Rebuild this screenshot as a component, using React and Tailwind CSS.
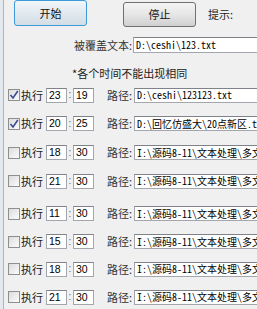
const rows = [
  { on: true,  h: '23', m: '19', path: 'D:\\ceshi\\123123.txt',      cls: 'h-[28px]' },
  { on: true,  h: '20', m: '25', path: 'D:\\回忆仿盛大\\20点新区.txt', cls: 'h-[29px]' },
  { on: false, h: '18', m: '30', path: 'I:\\源码8-11\\文本处理\\多文', cls: 'h-[29px]' },
  { on: false, h: '21', m: '30', path: 'I:\\源码8-11\\文本处理\\多文', cls: 'h-[28px]' },
  { on: false, h: '11', m: '30', path: 'I:\\源码8-11\\文本处理\\多文', cls: 'h-[29px] mt-[4px]' },
  { on: false, h: '15', m: '30', path: 'I:\\源码8-11\\文本处理\\多文', cls: 'h-[27px]' },
  { on: false, h: '18', m: '30', path: 'I:\\源码8-11\\文本处理\\多文', cls: 'h-[28px]' },
  { on: false, h: '21', m: '30', path: 'I:\\源码8-11\\文本处理\\多文', cls: 'h-[28px]' },
];

const cjk = "font-['Noto_Sans_CJK_SC',sans-serif]";
const pathFont = "font-['Noto_Sans_Mono_CJK_SC','Liberation_Mono','Noto_Sans_CJK_SC',monospace]";

function Box({ children, className = '' }) {
  return (
    <div
      className={`shrink-0 flex items-center bg-white border border-[#a3a6ad] border-t-[#7f8389] overflow-hidden whitespace-nowrap ${className}`}
    >
      {children}
    </div>
  );
}

function Check({ on }) {
  return (
    <div className="shrink-0 w-[12px] h-[12px] border border-[#8e8f8f] bg-gradient-to-br from-[#dcdcdc] to-[#fbfbfb] flex items-center justify-center">
      {on && (
        <svg width="10" height="10" viewBox="0 0 10 10">
          <path d="M1.5 5 L4 8 L8.8 1" fill="none" stroke="#3b4a93" strokeWidth="1.6" />
        </svg>
      )}
    </div>
  );
}

function TaskRow({ row }) {
  return (
    <div className={`flex items-center pl-[4px] whitespace-nowrap ${row.cls}`}>
      <Check on={row.on} />
      <span className={`shrink-0 w-[26px] pl-[1px] text-[11px] leading-none text-[#222] ${cjk}`}>执行</span>
      <Box className="w-[21px] h-[15px] pl-[2px]">
        <span className="font-['Liberation_Sans',sans-serif] text-[10.5px] leading-none text-black">{row.h}</span>
      </Box>
      <span className="shrink-0 w-[6px] text-center text-[10px] leading-none text-[#666] font-['Liberation_Sans',sans-serif]">:</span>
      <Box className="w-[21px] h-[15px] pl-[2px]">
        <span className="font-['Liberation_Sans',sans-serif] text-[10.5px] leading-none text-black">{row.m}</span>
      </Box>
      <span className={`shrink-0 ml-[13px] w-[27px] text-[11px] leading-none text-[#333] ${cjk}`}>路径:</span>
      <Box className="w-[140px] h-[15px] pl-[2px]">
        <span className={`${pathFont} text-[10px] leading-none text-black`}>{row.path}</span>
      </Box>
    </div>
  );
}

export default function App() {
  return (
    <div className="w-[257px] h-[309px] bg-[#f0f0f0] overflow-hidden flex">
      {/* window edge */}
      <div className="w-[4px] shrink-0 bg-[#e4e9ef] border-r border-[#a9b5c2]" />

      <div className="flex-1 flex flex-col min-w-0">
        {/* buttons */}
        <div className="h-[28px] flex items-start shrink-0 whitespace-nowrap">
          <button className={`shrink-0 ml-[10px] w-[73px] h-[26px] rounded-[3px] border border-[#3c9ad8] bg-gradient-to-b from-[#f1f6fa] to-[#d3dde5] text-[11px] text-[#111] ${cjk}`}>
            开始
          </button>
          <button className={`shrink-0 ml-[36px] mt-[2px] w-[73px] h-[25px] rounded-[3px] border border-[#707070] bg-gradient-to-b from-[#f4f4f4] via-[#e6e6e6] to-[#d0d0d0] text-[11px] text-[#111] ${cjk}`}>
            停止
          </button>
          <span className={`shrink-0 ml-[12px] mt-[9px] text-[11px] leading-none text-[#222] ${cjk}`}>提示:</span>
        </div>

        {/* target file */}
        <div className="mt-[9px] h-[16px] flex items-center shrink-0 whitespace-nowrap">
          <span className={`shrink-0 w-[129px] pr-[1px] text-right text-[11px] leading-none text-[#333] ${cjk}`}>被覆盖文本:</span>
          <Box className="w-[140px] h-[16px] pl-[2px]">
            <span className={`${pathFont} text-[10px] leading-none text-black`}>D:\ceshi\123.txt</span>
          </Box>
        </div>

        {/* note */}
        <div className={`mt-[13px] h-[14px] flex items-center pl-[68px] text-[11px] leading-none text-[#222] shrink-0 whitespace-nowrap ${cjk}`}>
          *各个时间不能出现相同
        </div>

        <div className="mt-[1px] flex flex-col">
          {rows.map((r, i) => (
            <TaskRow key={i} row={r} />
          ))}
        </div>
      </div>
    </div>
  );
}
